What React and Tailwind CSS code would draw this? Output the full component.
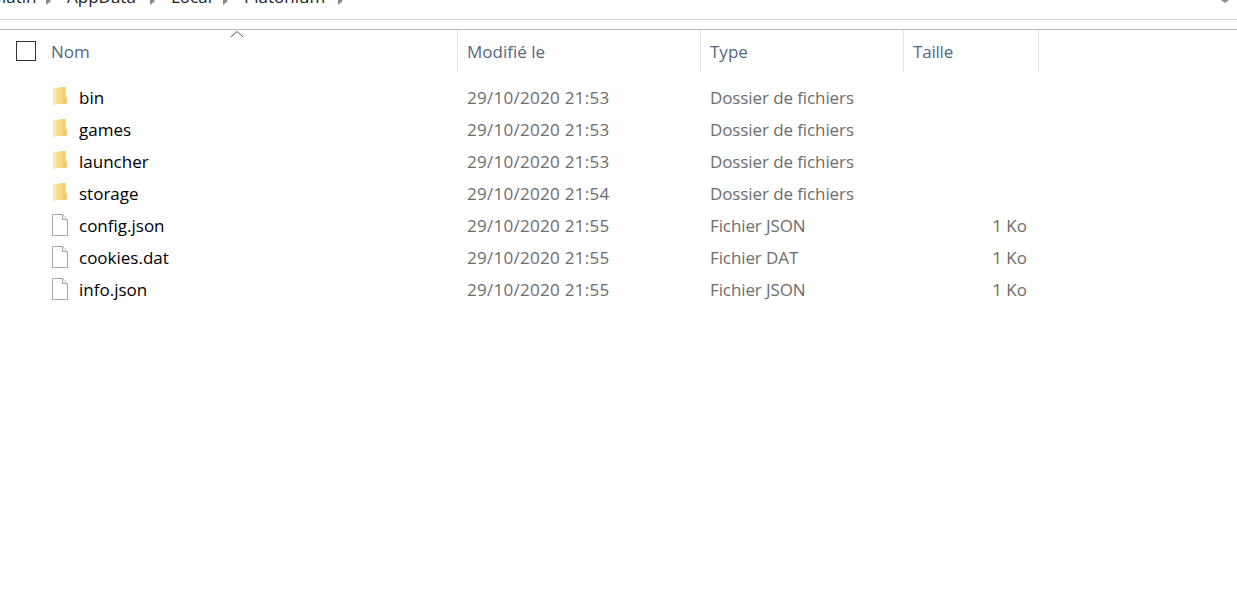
import React from 'react';

const rows = [
  { name: 'bin', date: '29/10/2020 21:53', type: 'Dossier de fichiers', size: '', folder: true },
  { name: 'games', date: '29/10/2020 21:53', type: 'Dossier de fichiers', size: '', folder: true },
  { name: 'launcher', date: '29/10/2020 21:53', type: 'Dossier de fichiers', size: '', folder: true },
  { name: 'storage', date: '29/10/2020 21:54', type: 'Dossier de fichiers', size: '', folder: true },
  { name: 'config.json', date: '29/10/2020 21:55', type: 'Fichier JSON', size: '1 Ko', folder: false },
  { name: 'cookies.dat', date: '29/10/2020 21:55', type: 'Fichier DAT', size: '1 Ko', folder: false },
  { name: 'info.json', date: '29/10/2020 21:55', type: 'Fichier JSON', size: '1 Ko', folder: false },
];

const crumbs = [
  { label: 'Matin', width: 'w-[76px]' },
  { label: 'AppData', width: 'w-[104px]' },
  { label: 'Local', width: 'w-[73px]' },
  { label: 'Platonium', width: 'w-[115px]' },
];

function FolderIcon() {
  return (
    <svg width="16" height="22" viewBox="0 0 16 22">
      <path d="M2 2 L14.5 1 L14.5 11 L16 11 L16 18 L5 18 L2 20.5 Z" fill="#f6d98a" />
      <path d="M2 2 L5.5 1.5 L5.5 18 L5 18 L2 20.5 Z" fill="#fbeab4" />
      <path d="M11 1 L14.5 1 L14.5 11 L16 11 L16 18 L11 18 Z" fill="#f1cd72" />
    </svg>
  );
}

function FileIcon() {
  return (
    <svg width="18" height="22" viewBox="0 0 18 22">
      <path d="M1.5 0.5 H11.5 L16.5 5.5 V21.5 H1.5 Z" fill="#ffffff" stroke="#a6a6a6" />
      <path d="M11.5 0.5 V5.5 H16.5" fill="#f2f2f2" stroke="#a6a6a6" />
    </svg>
  );
}

function Caret() {
  return <span className="self-end mb-[4px] w-0 h-0 border-y-[4px] border-y-transparent border-l-[5px] border-l-[#8a8a8a]" />;
}

export default function App() {
  return (
    <div className="w-[1237px] h-[603px] bg-white overflow-hidden font-['Open_Sans','Noto_Sans',sans-serif] text-[17px]">
      {/* breadcrumb, cut off by the crop */}
      <div className="h-[20px] border-b border-[#d9d9d9] overflow-hidden flex items-end pb-[10px] pr-[8px]">
        <div className="flex items-center -ml-[9px] text-[#1a1a1a] leading-[24px]">
          {crumbs.map((c) => (
            <div key={c.label} className={`flex items-center justify-between pr-[16px] ${c.width}`}>
              <span>{c.label}</span>
              <Caret />
            </div>
          ))}
        </div>
        <span className="ml-auto self-start w-0 h-0 border-x-[4px] border-x-transparent border-t-[3px] border-t-[#8a8a8a]" />
      </div>

      <div className="h-[9px]" />

      {/* column headers */}
      <div className="relative h-[43px] border-t border-[#b8b8b8] flex text-[#55677f]">
        <svg className="absolute left-[230px] top-0" width="14" height="8" viewBox="0 0 14 8" fill="none">
          <path d="M1 7 L7 1.5 L13 7" stroke="#555555" />
        </svg>
        <div className="w-[458px] h-[42px] border-r border-[#e5e5e5] flex items-center">
          <span className="ml-[16px] w-[20px] h-[20px] border border-[#333333]" />
          <span className="ml-[15px] pt-[1px]">Nom</span>
        </div>
        <div className="w-[243px] h-[42px] border-r border-[#e5e5e5] flex items-center pl-[9px] pt-[1px]">Modifié le</div>
        <div className="w-[203px] h-[42px] border-r border-[#e5e5e5] flex items-center pl-[9px] pt-[1px]">Type</div>
        <div className="w-[135px] h-[42px] border-r border-[#e5e5e5] flex items-center pl-[9px] pt-[1px] tracking-[-0.2px]">Taille</div>
      </div>

      {/* file rows */}
      <div className="pt-[9px]">
        {rows.map((r) => (
          <div key={r.name} className="h-[32px] flex items-center text-[#6d6d6d]">
            <div className="w-[458px] flex items-center text-black">
              <div className="w-[79px] pl-[51px] flex items-center">
                {r.folder ? <FolderIcon /> : <FileIcon />}
              </div>
              <span className="pt-[1px]">{r.name}</span>
            </div>
            <div className="w-[243px] pl-[9px] pt-[1px] tracking-[0.28px]">{r.date}</div>
            <div className="w-[203px] pl-[9px] pt-[1px] tracking-[-0.1px]">{r.type}</div>
            <div className="w-[135px] pr-[12px] pt-[1px] text-right">{r.size}</div>
          </div>
        ))}
      </div>
    </div>
  );
}
